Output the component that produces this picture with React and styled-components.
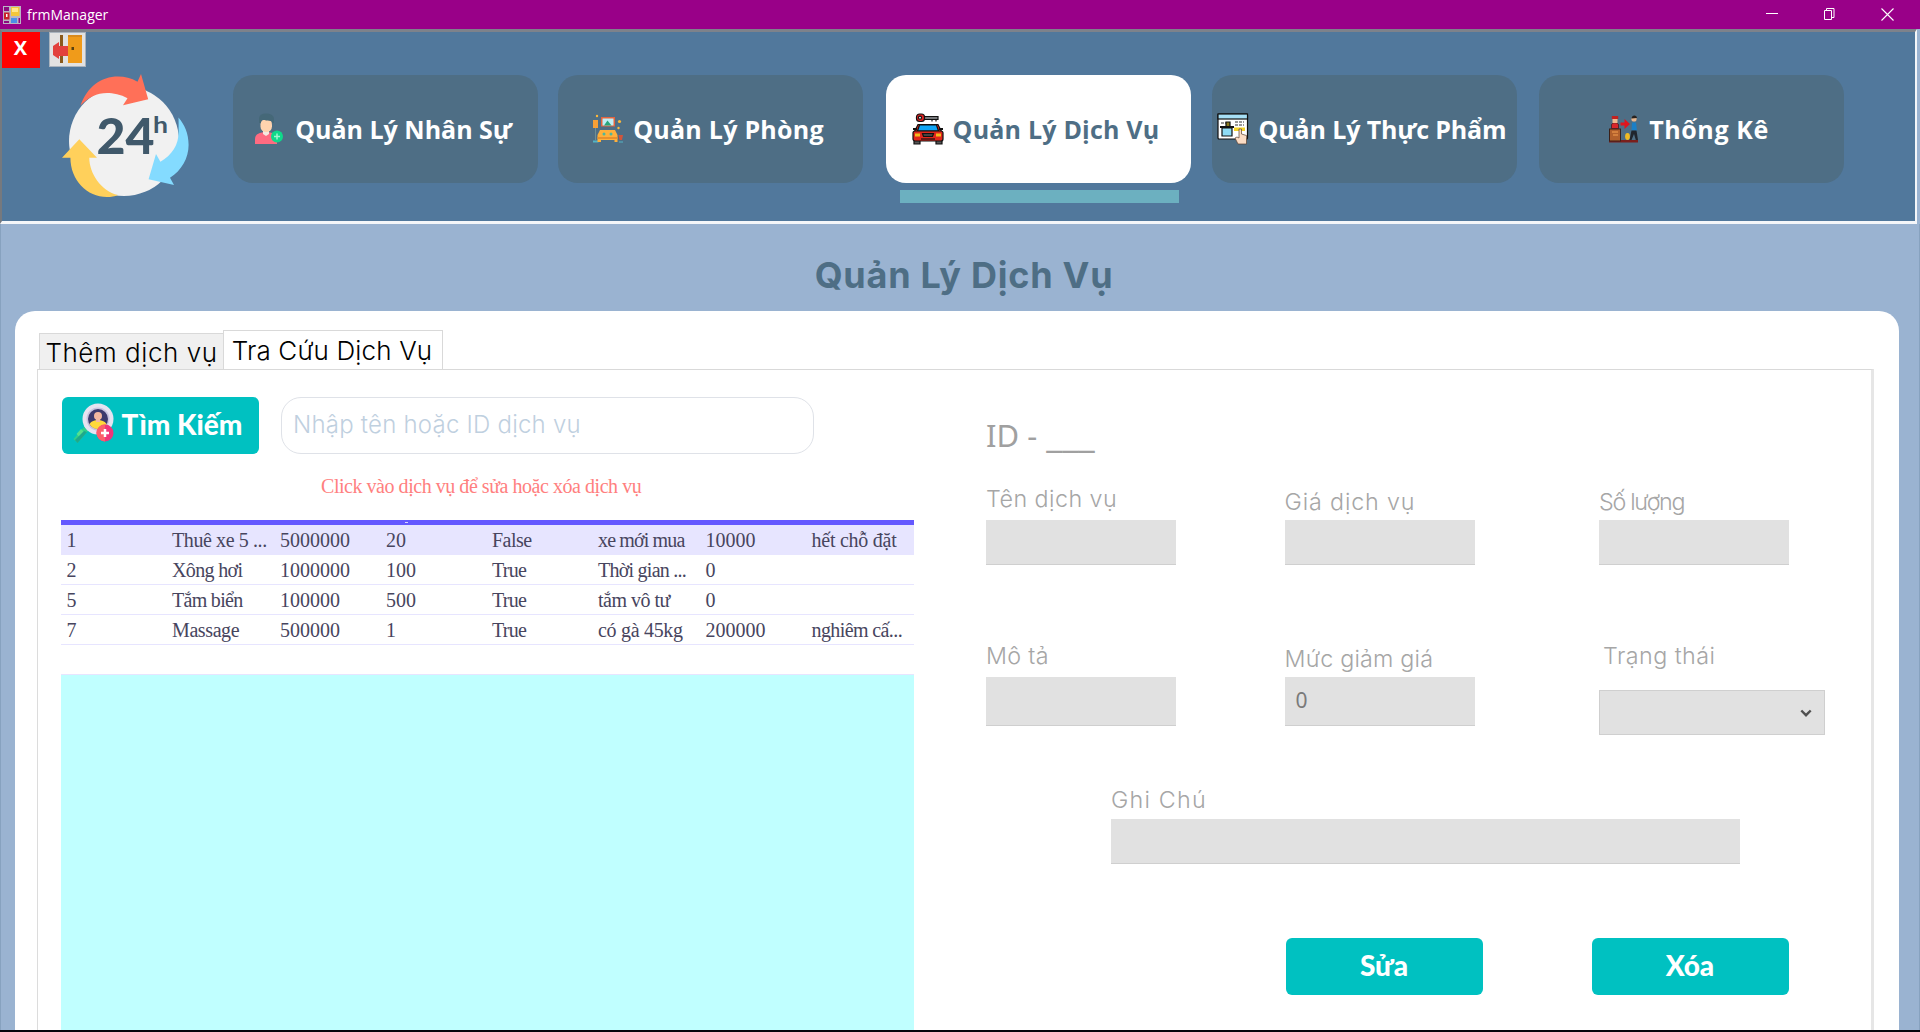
import React from "react";
import styled, { createGlobalStyle } from "styled-components";

const GlobalStyle = createGlobalStyle`
  *, *::before, *::after { box-sizing: border-box; }
  body { margin: 0; background: #05070d; overflow: hidden; }
`;

const ui = `"Open Sans", "Noto Sans", sans-serif`;
const geo = `Inter, "Open Sans", sans-serif`;
const serif = `"Liberation Serif", serif`;
const fat = `Lato, "Open Sans", sans-serif`;

const Window = styled.div`
  width: 1920px;
  height: 1032px;
  display: flex;
  flex-direction: column;
  overflow: hidden;
  background: #9ab3d1;
  border-bottom: 2px solid #05070d;
`;

/* ---------- title bar ---------- */
const TitleBar = styled.div`
  height: 29px;
  flex: none;
  display: flex;
  align-items: center;
  padding: 0 26px 0 3px;
  background: #990088;
  color: #fff;
`;
const WindowTitle = styled.span`
  margin-left: 6px;
  flex: 1;
  font: 400 14px/20px ${ui};
`;
const WindowControls = styled.div`
  display: flex;
  gap: 45px;
`;

/* ---------- header ---------- */
const Header = styled.header`
  height: 195px;
  flex: none;
  display: flex;
  margin-right: 3px;
  border: solid;
  border-width: 3px 2px 3px 2px;
  border-color: #7d828b #f4f6f9 #f4f6f9 #76797e;
  background: #51789c;
`;
const HeaderLeft = styled.div`
  width: 231px;
  flex: none;
  display: flex;
  flex-direction: column;
`;
const CornerTools = styled.div`
  display: flex;
  gap: 9px;
  height: 36px;
`;
const CloseBox = styled.button`
  width: 38px;
  height: 36px;
  padding: 0 1px 4px 0;
  border: 0;
  background: #ff0000;
  color: #fff;
  font: 700 20px/28px ${ui};
`;
const ExitBox = styled.div`
  width: 37px;
  height: 35px;
  border: 1px solid #a9b3bd;
  background: #e2e2e2;
`;
const LogoWrap = styled.div`
  margin: 5px 0 0 58px;
  line-height: 0;
`;
const Nav = styled.nav`
  display: flex;
  padding-top: 42.5px;
`;
const NavItem = styled.div`
  width: 305px;
  display: flex;
  flex-direction: column;
  align-items: center;
  margin-left: ${(p) => p.$before}px;
`;
const NavButton = styled.button`
  width: 305px;
  height: 108px;
  display: flex;
  align-items: center;
  justify-content: center;
  gap: ${(p) => p.$gap || 9}px;
  padding: 0 5px 0 0;
  border: 0;
  border-radius: 20px;
  background: ${(p) => (p.$active ? "#ffffff" : "#4e6e85")};
  color: ${(p) => (p.$active ? "#4e6e85" : "#ffffff")};
  font: 700 25px/34px ${ui};
  letter-spacing: ${(p) => p.$track}px;
  white-space: nowrap;
`;
const NavMarker = styled.div`
  width: 279px;
  height: 13px;
  margin: 7.5px 0 0 2px;
  background: #6cb0c0;
`;

/* ---------- page ---------- */
const Page = styled.main`
  flex: 1;
  min-height: 0;
  display: flex;
  flex-direction: column;
  border: solid #87a2bf;
  border-width: 0 1px;
`;
const PageTitle = styled.h1`
  height: 87px;
  flex: none;
  margin: 0;
  padding: 31px 0 0 8px;
  text-align: center;
  color: #4e6e85;
  font: 700 36px/40px ${geo};
  letter-spacing: 0.75px;
`;
const Panel = styled.section`
  flex: 1;
  min-height: 0;
  display: flex;
  flex-direction: column;
  margin: 0 20px 0 14px;
  padding: 19px 25px 0 22px;
  border-radius: 20px 20px 0 0;
  background: #fff;
`;
const TabStrip = styled.div`
  height: 39px;
  flex: none;
  display: flex;
  align-items: flex-end;
  padding-left: 2px;
`;
const Tab = styled.div`
  width: ${(p) => p.$w}px;
  height: ${(p) => (p.$active ? 40 : 36)}px;
  margin-bottom: ${(p) => (p.$active ? -1 : 0)}px;
  padding: 1px ${(p) => (p.$active ? 2 : 0)}px 0 0;
  border: 1px solid #d9d9d9;
  border-bottom: 0;
  border-right-width: ${(p) => (p.$active ? 1 : 0)}px;
  background: ${(p) => (p.$active ? "#fff" : "#f0f0f0")};
  color: #000;
  text-align: center;
  font: 300 26px/${(p) => (p.$active ? 37 : 35)}px ${geo};
  letter-spacing: ${(p) => p.$track}px;
  white-space: nowrap;
`;
const TabPage = styled.div`
  flex: 1;
  min-height: 0;
  display: flex;
  gap: 72px;
  padding-left: 23px;
  border: solid;
  border-width: 1px 3px 0 1px;
  border-color: #d9d9d9 #e6e6e6 #d9d9d9 #dcdcdc;
`;

/* ---------- left: search and list ---------- */
const ListPane = styled.div`
  width: 853px;
  flex: none;
  display: flex;
  flex-direction: column;
  padding-top: 27px;
`;
const SearchRow = styled.div`
  display: flex;
  gap: 22.5px;
  padding-left: 0.5px;
`;
const ActionButton = styled.button`
  width: 197px;
  height: 57px;
  display: flex;
  align-items: center;
  justify-content: center;
  gap: 8px;
  padding: 0 ${(p) => p.$right || 0}px 3px 0;
  border: 0;
  border-radius: 6px;
  background: #00c1c1;
  color: #fff;
  font: 900 28px/34px ${fat};
  white-space: nowrap;
`;
const SearchBox = styled.div`
  width: 533px;
  height: 57px;
  padding: 0 0 0 11px;
  border: 1.5px solid #dfe2e8;
  border-radius: 20px;
  color: #bfd0df;
  font: 300 24px/54px ${geo};
  letter-spacing: 0.22px;
  white-space: nowrap;
`;
const Hint = styled.p`
  margin: 20px 0 22px 260px;
  color: #ff8080;
  font: 400 20px/24px ${serif};
  letter-spacing: -0.46px;
  white-space: nowrap;
`;
const TableHead = styled.div`
  height: 5px;
  flex: none;
  padding: 2px 0 0 344px;
  background: #6458ff;
`;
const HeadMark = styled.div`
  width: 3px;
  height: 1px;
  background: #d8d5ff;
`;
const Row = styled.div`
  height: 30px;
  flex: none;
  display: grid;
  grid-template-columns: 105.5px 108px 106px 106px 106px 107.5px 106px 106px;
  padding-left: 5.5px;
  border-bottom: 1px solid #e7e5ff;
  background: ${(p) => (p.$selected ? "#e7e5ff" : "#fff")};
`;
const Cell = styled.span`
  color: #47455e;
  font: 400 20px/30px ${serif};
  letter-spacing: ${(p) => p.$track}px;
  white-space: nowrap;
`;
const EmptyArea = styled.div`
  flex: 1;
  background: #c0ffff;
`;

/* ---------- right: form ---------- */
const Form = styled.div`
  flex: none;
  width: 839px;
  padding-top: 45px;
`;
const IdLine = styled.div`
  display: flex;
  height: 41px;
  gap: 9px;
  color: #a0a0a0;
  font: 400 31px/40px "Noto Sans", sans-serif;
  white-space: nowrap;
`;
const IdBlank = styled.span`
  font-size: 36.5px;
  margin-top: -2px;
`;
const FieldRow = styled.div`
  display: grid;
  grid-template-columns: 298.5px 314.5px 226px;
  align-items: ${(p) => p.$align};
  margin-top: ${(p) => p.$top}px;
`;
const Field = styled.div`
  display: flex;
  flex-direction: column;
  margin: ${(p) => p.$top || 0}px 0 0 ${(p) => p.$left || 0}px;
`;
const Label = styled.label`
  margin: 0 0 ${(p) => p.$gap}px ${(p) => p.$left || 0}px;
  color: #a6a6a6;
  font: 300 23.3px/30px ${geo};
  letter-spacing: ${(p) => p.$track}px;
  white-space: nowrap;
`;
const Input = styled.div`
  width: ${(p) => p.$w || 190}px;
  height: ${(p) => p.$h || 45}px;
  padding: 0 0 0 11px;
  background: #e1e1e1;
  border-bottom: 1px solid #cfcfcf;
  color: #7a7a7a;
  font: 400 21px/46px "Noto Sans", sans-serif;
`;
const Select = styled.div`
  width: 226px;
  height: 45px;
  display: flex;
  align-items: center;
  justify-content: flex-end;
  padding: 2px 12px 0 0;
  border: 1px solid #cfcfcf;
  background: #e1e1e1;
`;
const FormActions = styled.div`
  display: flex;
  gap: 109px;
  margin: 74px 0 0 299.5px;
`;

/* ---------- drawings ---------- */
const AppIcon = () => (
  <svg width="18" height="18" viewBox="0 0 18 18">
    <rect width="18" height="18" fill="#b9b4c4" />
    <rect x="1" y="1" width="5" height="4" fill="#8d0a80" />
    <rect x="8" y="1" width="8.5" height="9" fill="#f3c63a" />
    <rect x="9" y="2" width="6" height="4" fill="#ffe68a" />
    <rect x="1" y="6.5" width="5.5" height="7" fill="#c8232a" />
    <rect x="3" y="8" width="1.5" height="3" fill="#fff" />
    <rect x="8" y="12" width="6" height="5" fill="#4b8fe8" />
    <rect x="1" y="15" width="5" height="2" fill="#8d0a80" />
    <rect x="15.5" y="12" width="1.5" height="5" fill="#8d0a80" />
  </svg>
);

const MinIcon = () => (
  <svg width="13" height="13"><path d="M0 5.5h12" stroke="#fff" /></svg>
);
const RestoreIcon = () => (
  <svg width="12" height="13" fill="none" stroke="#fff">
    <path d="M.5 2.500h7v9h-7z" /><path d="M2.500 2.500V.5h7.500v9H8" />
  </svg>
);
const XIcon = () => (
  <svg width="13" height="13"><path d="M.5.5l12 12M12.500.5l-12 12" stroke="#fff" strokeWidth="1.100" /></svg>
);

const DoorIcon = () => (
  <svg width="35" height="33" viewBox="0 0 35 33">
    <rect x="10" y="2" width="3" height="28" fill="#8a5a1c" />
    <rect x="18" y="2" width="14" height="28" fill="#f09b1a" />
    <path d="M18 2h14v2H18z" fill="#d98a1c" />
    <rect x="21.500" y="14" width="2.500" height="3" fill="#5a4210" />
    <path d="M3 13l6-4v4h9v10H9v3l-6-4z" fill="#e2413d" />
  </svg>
);

const Logo24 = () => (
  <svg width="130" height="126" viewBox="60 73 130 126">
    <circle cx="124" cy="141" r="55" fill="#f1f1f1" />
    <path d="M80.500 105.500C87 87 101 76.500 118 76.500c7 0 13 1.500 19.500 5.200L141 74l7.200 25.300-25.200 6 4.500-7C121 94.500 113 93 107 93c-10 0-19 4.500-26.500 12.500z" fill="#ff7058" />
    <path d="M178.500 117.500c6 7 10.100 16 10.100 27.500 0 13-7 25.500-18.600 32.700l4 7.300-25.400-5.700L156 154l4.400 7.700c12-7 18.200-17 18.200-29.700 0-5 .1-10-.1-14.500z" fill="#84dbff" />
    <path d="M79.300 139.300L97 157.700h-7.700c0 15.500 11.700 33.300 28.700 37.300-3 1.400-7 2-11 2-20 0-36.600-17-36.600-39.300H62z" fill="#ffd05b" />
    <text x="96.500" y="154.300" fontFamily="Lato, sans-serif" fontWeight="900" fontSize="49" textLength="58" lengthAdjust="spacingAndGlyphs" fill="#40596b">24</text>
    <text x="153" y="132.800" fontFamily="Lato, sans-serif" fontWeight="700" fontSize="23" textLength="15" lengthAdjust="spacingAndGlyphs" fill="#40596b">h</text>
  </svg>
);

const StaffIcon = () => (
  <svg width="30" height="32" viewBox="0 0 30 32">
    <path d="M1 31v-5c0-5 5-7 11-7s11 2 11 7v5z" fill="#ff6b81" />
    <path d="M9 16h6v5l-3 2-3-2z" fill="#f5e9e0" />
    <rect x="6.500" y="6" width="11.500" height="13" rx="5.500" fill="#ffd3ae" />
    <path d="M5 10V6c0-4 3-5.500 7-5.500S20 2 20 6v4h-2V8c-4 0-8-1-9-1-2 0-2 1-2 3z" fill="#456878" />
    <circle cx="23" cy="23.500" r="6" fill="#0fd98a" />
    <path d="M23 20.500v6M20 23.500h6" stroke="#9ff5d0" strokeWidth="1.500" />
  </svg>
);
const RoomIcon = () => (
  <svg width="32" height="30" viewBox="0 0 32 30">
    <rect x="9" y="3" width="14" height="9.500" fill="#e4643d" />
    <rect x="10.500" y="4.500" width="11" height="7" fill="#bfeef5" />
    <path d="M12 11.500l3.500-5 4 5z" fill="#27a57a" />
    <rect x="1" y="6" width="5" height="8" fill="#f7a035" />
    <path d="M3.500 14v12" stroke="#6f8f94" />
    <path d="M1 27.500h5.500" stroke="#52b4c4" strokeWidth="2" />
    <circle cx="27.500" cy="7.500" r="1.600" fill="#ffb938" />
    <circle cx="5" cy="2" r="1.200" fill="#ffb938" />
    <circle cx="26.500" cy="14" r="1.200" fill="#ffb938" />
    <path d="M8 16h15l2.500 5v7h-3v-2H9v2H5.500v-7z" fill="#ffb03b" />
    <path d="M5.500 23h20v2h-20z" fill="#e8902c" />
    <circle cx="12" cy="20" r="1.500" fill="#4bb7a0" />
    <circle cx="19" cy="20" r="1.500" fill="#4bb7a0" />
    <path d="M26.500 21h4.500l-1 5h-2.500z" fill="#d1553b" />
    <path d="M27 28h4" stroke="#52b4c4" />
  </svg>
);
const CarIcon = () => (
  <svg width="32" height="32" viewBox="0 0 32 32" stroke="#111" strokeWidth="1.200">
    <path d="M11 3.500h15v3H11z" fill="#77797c" />
    <path d="M20 6.500v2M24 6.500v2" />
    <rect x="4.500" y="1" width="8" height="7.500" rx="3" fill="#e02020" />
    <circle cx="8" cy="4.700" r="1.500" fill="#fff" />
    <path d="M2 26h6v5H2zM24 26h6v5h-6z" fill="#555" />
    <path d="M6 11.500h20l3.500 7H2.500z" fill="#d9261c" />
    <path d="M7.500 12h17l2 6h-21z" fill="#10a5f5" />
    <path d="M1 16h4M27 16h4" strokeWidth="2" />
    <rect x="1" y="18" width="30" height="10" rx="2" fill="#e0261c" />
    <path d="M3 22h5M24 22h5" stroke="#f6b91c" strokeWidth="3" />
    <path d="M10.500 20.500h11l-1 3h-9z" fill="#444" />
    <path d="M9 26h14" />
  </svg>
);
const FoodIcon = () => (
  <svg width="32" height="32" viewBox="0 0 32 32" stroke="#111" strokeWidth="1.200">
    <rect x="1" y="1" width="29.500" height="25" rx="1" fill="#fff" />
    <rect x="1" y="1" width="29.500" height="5" fill="#a6dff5" />
    <path d="M4 10h9M18 9h9M18 12h9" stroke="#333" strokeDasharray="3 1" />
    <path d="M9 9h4v5H9z" fill="#8a7a20" />
    <path d="M3 14h14" strokeWidth="2" />
    <path d="M5 15h10v8H5z" fill="#8fdcf5" />
    <rect x="17" y="14.500" width="11" height="3.500" fill="#f5d327" stroke="none" />
    <path d="M21 31l-3-6 2-1 2 1v-9h2.500v5l5 1.500V31z" fill="#fbdcc4" stroke="#5a4030" strokeWidth=".7" />
  </svg>
);
const StatsIcon = () => (
  <svg width="32" height="30" viewBox="0 0 32 30">
    <path d="M1 26h29v2.500H1z" fill="#7a1f1c" />
    <rect x="1.500" y="15" width="11" height="12" fill="#b2602c" stroke="#3a2018" />
    <path d="M4 18h6M5 21h5" stroke="#e08a44" strokeWidth="1.500" />
    <path d="M3.500 14.500V11c0-3 7-3 7 0v3.500z" fill="#d7262b" stroke="#3a1518" strokeWidth=".7" />
    <rect x="4.500" y="4" width="5" height="5" fill="#f0b98e" />
    <path d="M3.800 5V2h6.400v3z" fill="#c2221f" />
    <path d="M12.500 8.500h4V5l5.500 5-5.500 5v-3.500h-4z" fill="#e0141c" />
    <circle cx="26" cy="5" r="2.600" fill="#eab78e" />
    <path d="M23.500 4.500c0-4 5.500-4 5.500-.5z" fill="#27221f" />
    <path d="M24 8.500h4l1 8h-5.500z" fill="#1b7fc6" />
    <path d="M23.500 16.500h5L30 26h-2.200L26 20l-2.500 6h-2z" fill="#20252d" />
    <ellipse cx="19.500" cy="22.500" rx="2.400" ry="3.400" fill="#f0bb23" />
  </svg>
);
const SearchIcon = () => (
  <svg width="42" height="42" viewBox="0 0 42 42">
    <path d="M12 24l4 4L5.500 40l-4-4z" fill="#2fd08a" />
    <path d="M9 26l4 4-4.500 5-4-4z" fill="#55e08e" />
    <path d="M3 37l9-9 3 1L5.500 40z" fill="#1fa88c" />
    <path d="M12 23l3-3 5 5-4 3z" fill="#d9d6ea" />
    <circle cx="26" cy="16" r="15.500" fill="#e6e3f1" />
    <circle cx="26" cy="16" r="11.500" fill="#c9c4e0" />
    <circle cx="26" cy="16" r="10" fill="#3d3a6e" />
    <path d="M17.500 21c2-3 5-4 8.500-4s6.500 1 8.500 4c-2 3.500-5 5-8.500 5s-6.500-1.500-8.500-5z" fill="#ffd93b" />
    <circle cx="26" cy="13" r="4" fill="#f4b8a0" />
    <path d="M24 15h4v4h-4z" fill="#f4b8a0" />
    <circle cx="33" cy="30" r="8.500" fill="#f0357a" />
    <path d="M33 21.500a8.500 8.500 0 0 0 0 17z" fill="#fb5f6b" />
    <path d="M33 26v8M29 30h8" stroke="#fff" strokeWidth="2.500" />
  </svg>
);
const Chevron = () => (
  <svg width="12" height="9" fill="none"><path d="M1.300 1.500l4.700 4.700 4.700-4.700" stroke="#505050" strokeWidth="2.400" /></svg>
);

const navItems = [
  { text: "Quản Lý Nhân Sự", icon: <StaffIcon />, track: 0, before: 0, gap: 11 },
  { text: "Quản Lý Phòng", icon: <RoomIcon />, track: 0.25, before: 20 },
  { text: "Quản Lý Dịch Vụ", icon: <CarIcon />, track: 0.2, before: 22.5, active: true },
  { text: "Quản Lý Thực Phẩm", icon: <FoodIcon />, track: -0.13, before: 21.5 },
  { text: "Thống Kê", icon: <StatsIcon />, track: 0.6, before: 21.5 },
];

const rows = [
  [["1"], ["Thuê xe 5 ...", -0.4], ["5000000"], ["20"], ["False", -0.5], ["xe mới mua", -0.85], ["10000"], ["hết chỗ đặt", -0.25]],
  [["2"], ["Xông hơi", -0.65], ["1000000"], ["100"], ["True", -0.7], ["Thời gian ...", -0.75], ["0"], [""]],
  [["5"], ["Tắm biển", -0.7], ["100000"], ["500"], ["True", -0.7], ["tắm vô tư", -0.5], ["0"], [""]],
  [["7"], ["Massage", -0.4], ["500000"], ["1"], ["True", -0.7], ["có gà 45kg", -0.3], ["200000"], ["nghiêm cấ...", -0.6]],
  [],
];

export default function App() {
  return (
    <Window>
      <GlobalStyle />
      <TitleBar>
        <AppIcon />
        <WindowTitle>frmManager</WindowTitle>
        <WindowControls>
          <MinIcon />
          <RestoreIcon />
          <XIcon />
        </WindowControls>
      </TitleBar>

      <Header>
        <HeaderLeft>
          <CornerTools>
            <CloseBox>X</CloseBox>
            <ExitBox><DoorIcon /></ExitBox>
          </CornerTools>
          <LogoWrap><Logo24 /></LogoWrap>
        </HeaderLeft>
        <Nav>
          {navItems.map((n) => (
            <NavItem key={n.text} $before={n.before}>
              <NavButton $active={n.active} $track={n.track} $gap={n.gap}>
                {n.icon}
                {n.text}
              </NavButton>
              {n.active && <NavMarker />}
            </NavItem>
          ))}
        </Nav>
      </Header>

      <Page>
        <PageTitle>Quản Lý Dịch Vụ</PageTitle>
        <Panel>
          <TabStrip>
            <Tab $w={184} $track={0.55}>Thêm dịch vụ</Tab>
            <Tab $w={220} $track={0.15} $active>Tra Cứu Dịch Vụ</Tab>
          </TabStrip>
          <TabPage>
            <ListPane>
              <SearchRow>
                <ActionButton $right={6}><SearchIcon />Tìm Kiếm</ActionButton>
                <SearchBox>Nhập tên hoặc ID dịch vụ</SearchBox>
              </SearchRow>
              <Hint>Click vào dịch vụ để sửa hoặc xóa dịch vụ</Hint>
              <TableHead><HeadMark /></TableHead>
              {rows.map((r, i) => (
                <Row key={i} $selected={i === 0}>
                  {r.map(([text, track], j) => (
                    <Cell key={j} $track={track || 0}>{text}</Cell>
                  ))}
                </Row>
              ))}
              <EmptyArea />
            </ListPane>

            <Form>
              <IdLine><span>ID -</span><IdBlank>___</IdBlank></IdLine>
              <FieldRow $align="end" $top={28}>
                <Field><Label $gap={6} $track={0.45}>Tên dịch vụ</Label><Input /></Field>
                <Field><Label $gap={3} $track={0.85}>Giá dịch vụ</Label><Input /></Field>
                <Field><Label $gap={3} $track={-1.3}>Số lượng</Label><Input /></Field>
              </FieldRow>
              <FieldRow $align="start" $top={75}>
                <Field $top={1}><Label $gap={6} $track={0.3}>Mô tả</Label><Input $h={49} /></Field>
                <Field $top={4}><Label $gap={3} $track={0.2}>Mức giảm giá</Label><Input $h={49}>0</Input></Field>
                <Field $top={1}><Label $gap={19} $left={4} $track={0.45}>Trạng thái</Label><Select><Chevron /></Select></Field>
              </FieldRow>
              <Field $top={50} $left={125}>
                <Label $gap={4} $track={1.2}>Ghi Chú</Label>
                <Input $w={629} />
              </Field>
              <FormActions>
                <ActionButton>Sửa</ActionButton>
                <ActionButton>Xóa</ActionButton>
              </FormActions>
            </Form>
          </TabPage>
        </Panel>
      </Page>
    </Window>
  );
}
